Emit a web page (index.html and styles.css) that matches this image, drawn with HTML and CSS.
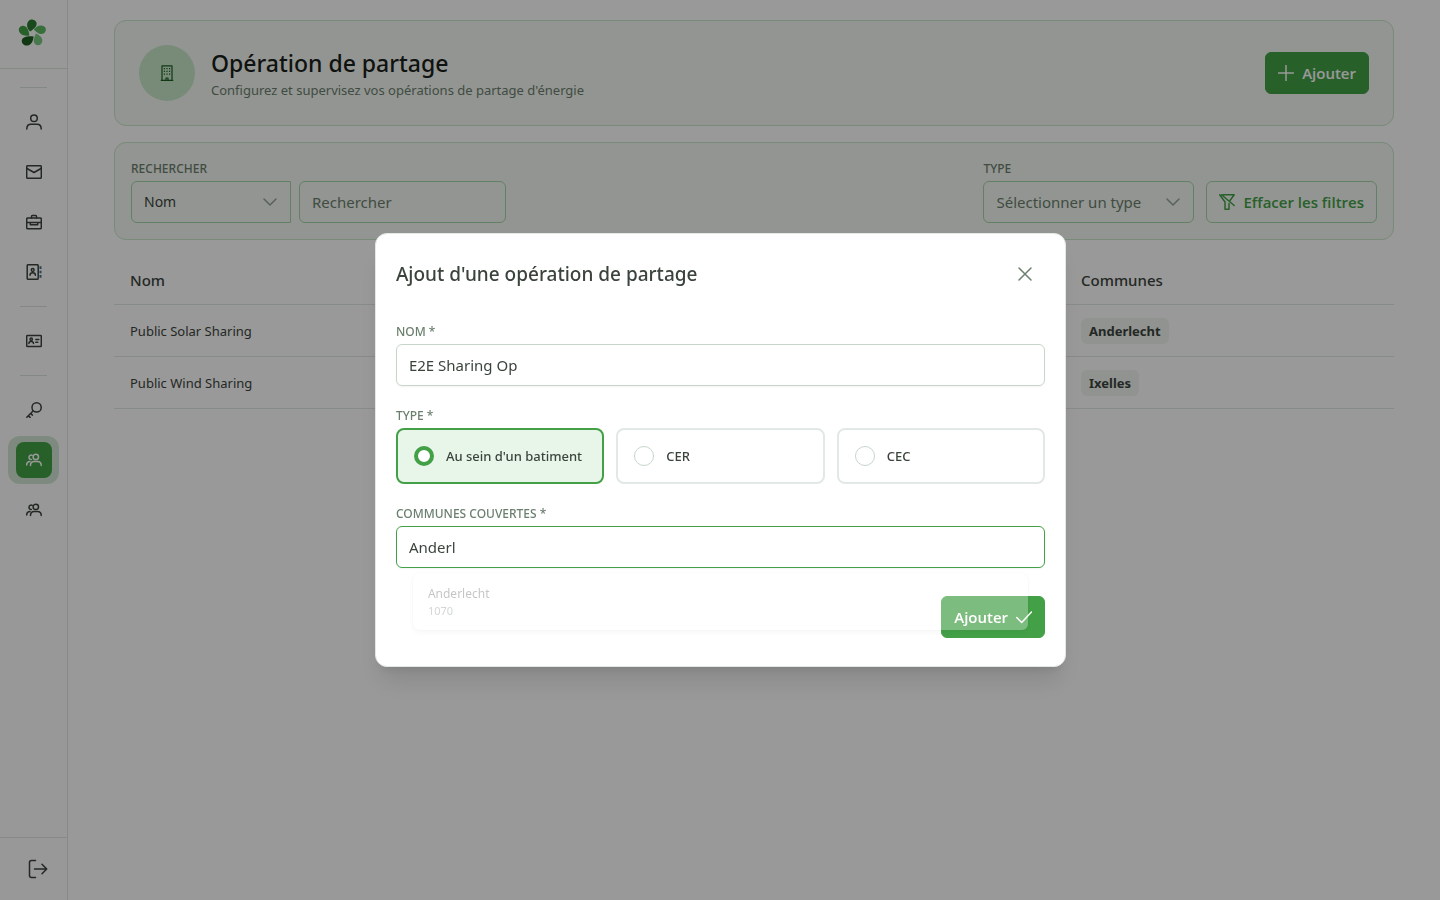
FILE: index.html
```html
<!DOCTYPE html>
<html lang="fr">
<head>
<meta charset="utf-8">
<meta name="viewport" content="width=device-width, initial-scale=1">
<title>Opération de partage</title>
<link rel="stylesheet" href="styles.css">
</head>
<body>
<div class="app">
  <aside class="sidebar">
    <a class="brand" href="#" aria-label="Accueil">
      <svg width="32" height="32" viewBox="0 2 32 32" aria-hidden="true">
        <path fill="#2d7a32" d="M14.200 15.600 C10.700 12 10.200 8 12.400 5.200 C14.200 2.600 18.800 3 20.300 6 C21.700 10 18.500 12.500 14.200 15.600Z"/>
        <path fill="#5cb860" d="M17.800 13.600 C20.500 9.900 24 8.500 27.500 10 C30.600 11.500 30.600 15.800 27.500 17.600 C24.200 19 21 17.200 17.800 13.600Z"/>
        <path fill="#7cc880" d="M19.900 17.600 C24.200 19.500 26.500 22 26.300 25.400 C25.800 29 21.500 30.400 19 28 C16.700 25.500 18 22 19.900 17.600Z"/>
        <path fill="#1b5e20" d="M17.600 20.400 C17.200 24.800 15.600 28.200 12 29.400 C8.500 30.200 5.300 27.500 5.800 24.200 C6.800 20.800 11 19.900 17.600 20.400Z"/>
        <path fill="#43a047" d="M13.300 19.500 C9.500 20.300 5.500 19.300 3.600 16.500 C1.800 13.500 3.300 10 6.800 9.800 C10.800 9.900 12.800 13.500 13.300 19.500Z"/>
      </svg>
    </a>
    <nav class="menu" aria-label="Menu principal">
      <hr>
      <a href="#" aria-label="Profil"><span><svg class="icon" viewBox="0 0 16 16"><circle cx="8" cy="4.300" r="3.300"/><path d="M.8 14.900c0-3.300 1.700-4.600 4.200-4.600h6c2.500 0 4.200 1.300 4.200 4.600"/></svg></span></a>
      <a href="#" aria-label="Messages"><span><svg class="icon" viewBox="0 0 16 16"><rect x=".7" y="1.700" width="14.600" height="12.600" rx="1"/><path d="M1 4.500l7 4 7-4"/></svg></span></a>
      <a href="#" aria-label="Entreprise"><span><svg class="icon" viewBox="0 0 16 16"><rect x=".7" y="4" width="14.600" height="10.700" rx="1"/><path d="M5.500 4V2.200q0-.8.8-.8h3.400q.8 0 .8.800V4M1 8.500h14M4.300 8.500v2.300h7.400V8.500"/></svg></span></a>
      <a href="#" aria-label="Contacts"><span><svg class="icon" viewBox="0 0 16 16"><rect x="1.200" y=".7" width="11" height="14.600" rx="1"/><circle cx="6.700" cy="6" r="1.400"/><path d="M4 11.300c0-1.900 1-2.500 2.700-2.500s2.700.6 2.700 2.500"/><path stroke="#3d7296" stroke-linecap="butt" stroke-width="2" d="M14.500 2.300v2.600M14.500 6.700v2.600M14.500 11.100v2.600"/></svg></span></a>
      <hr>
      <a href="#" aria-label="Membres"><span><svg class="icon" viewBox="0 0 16 16"><rect x=".7" y="2.500" width="14.600" height="11" rx=".8"/><circle cx="5.200" cy="6.300" r="1.200"/><path d="M2.900 10.600c0-1.600.9-2 2.300-2s2.300.4 2.300 2M9.800 6.500h3M9.800 9.300h2"/></svg></span></a>
      <hr>
      <a href="#" aria-label="Clés"><span><svg class="icon" viewBox="0 0 16 16"><circle cx="10.600" cy="5.400" r="4.600"/><path d="M7.300 8.700L.8 15.200M2.300 13.700l1.800 1.700M4.600 11.400l1.800 1.700"/></svg></span></a>
      <a class="active" href="#" aria-current="page" aria-label="Opérations de partage"><span><svg class="icon" viewBox="0 0 16 16"><circle cx="9.800" cy="4.900" r="2.700"/><path d="M4.500 13.500c0-2.800 1.600-3.900 3.800-3.900h3.100c2.200 0 3.800 1.100 3.800 3.900M6.200 3.400c-1.400-.8-3.200.2-3.200 1.900 0 1.400 1 2.300 2.300 2.300M.7 13c0-2.600 1.300-3.500 3.300-3.600"/></svg></span></a>
      <a href="#" aria-label="Utilisateurs"><span><svg class="icon" viewBox="0 0 16 16"><circle cx="9.800" cy="4.900" r="2.700"/><path d="M4.500 13.500c0-2.800 1.600-3.900 3.800-3.900h3.100c2.200 0 3.800 1.100 3.800 3.900M6.200 3.400c-1.400-.8-3.200.2-3.200 1.900 0 1.400 1 2.300 2.300 2.300M.7 13c0-2.600 1.300-3.500 3.300-3.600"/></svg></span></a>
    </nav>
    <button class="logout" type="button" aria-label="Se déconnecter"><svg class="icon" viewBox="0 0 20 20"><path d="M7.500 1.500H3.500q-2 0-2 2v13q0 2 2 2h4M6.500 10H18.500M14 5.300L18.700 10 14 14.700"/></svg></button>
  </aside>

  <main class="main">
    <header class="panel page-head">
      <span class="avatar"><svg class="icon" viewBox="0 0 16 16"><path d="M3 15V.8h10V15M2.200 15.300h11.600M7 15v-2h2v2"/><path stroke-linecap="butt" d="M4.800 3.700h1.200M7.400 3.700h1.200M10 3.700h1.200M4.800 6.400h1.200M7.400 6.400h1.200M10 6.400h1.200M4.800 9.100h1.200M7.400 9.100h1.200M10 9.100h1.200"/></svg></span>
      <div class="page-title">
        <h1>Opération de partage</h1>
        <p>Configurez et supervisez vos opérations de partage d'énergie</p>
      </div>
      <button class="btn" type="button"><svg class="icon" viewBox="0 0 16 16"><path d="M8 .5v15M.5 8h15"/></svg>Ajouter</button>
    </header>

    <section class="panel filters" aria-label="Filtres">
      <div class="field">
        <label for="search">Rechercher</label>
        <div class="row">
          <div class="select select-key">
            <select aria-label="Champ de recherche"><option>Nom</option></select>
            <svg class="icon" viewBox="0 0 14 14"><path d="M1 4l6 6 6-6"/></svg>
          </div>
          <input id="search" class="control search" type="text" placeholder="Rechercher">
        </div>
      </div>
      <div class="row filter-end">
        <div class="field">
          <label for="type">Type</label>
          <div class="select select-type">
            <select id="type"><option>Sélectionner un type</option></select>
            <svg class="icon" viewBox="0 0 14 14"><path d="M1 4l6 6 6-6"/></svg>
          </div>
        </div>
        <button class="btn btn-outline" type="button"><svg class="icon" viewBox="0 0 16 16"><path d="M4 .8h11.200L11 6.500M.7.8L6 8v7.200h4V9.500M2.500.8L15.200 11.500"/></svg>Effacer les filtres</button>
      </div>
    </section>

    <table class="list">
      <thead><tr><th>Nom</th><th>Communes</th></tr></thead>
      <tbody>
        <tr><td>Public Solar Sharing</td><td><span class="tag">Anderlecht</span></td></tr>
        <tr><td>Public Wind Sharing</td><td><span class="tag">Ixelles</span></td></tr>
      </tbody>
    </table>
  </main>
</div>

<div class="mask">
  <div class="dialog" role="dialog" aria-modal="true" aria-labelledby="dialog-title">
    <div class="dialog-head">
      <h2 id="dialog-title">Ajout d'une opération de partage</h2>
      <button class="close" type="button" aria-label="Fermer"><svg class="icon" viewBox="0 0 16 16"><path d="M2 2l12 12M14 2L2 14"/></svg></button>
    </div>
    <form class="form">
      <div class="field">
        <label for="name">Nom *</label>
        <input id="name" class="control" type="text" value="E2E Sharing Op">
      </div>
      <fieldset class="field">
        <legend>Type *</legend>
        <div class="choices">
          <label class="choice"><input type="radio" name="kind" checked>Au sein d'un batiment</label>
          <label class="choice"><input type="radio" name="kind">CER</label>
          <label class="choice"><input type="radio" name="kind">CEC</label>
        </div>
      </fieldset>
      <div class="field">
        <label for="communes">Communes couvertes *</label>
        <div class="combo">
          <input id="communes" class="control focused" type="text" value="Anderl" autocomplete="off">
          <ul class="options"><li>Anderlecht<small>1070</small></li></ul>
        </div>
      </div>
      <button class="btn submit" type="button">Ajouter<svg class="icon" viewBox="0 0 16 16"><path d="M.7 8.500l5 5L15.500 3"/></svg></button>
    </form>
  </div>
</div>
</body>
</html>
```
FILE: styles.css
```css
* { box-sizing: border-box; }

body {
  margin: 0;
  font-family: "Noto Sans", "Open Sans", sans-serif;
  font-size: 15px;
  line-height: 20px;
  color: #3b443c;
  background: #fff;
}

button, input, select { font: inherit; color: inherit; }
h1, h2, p, ul, fieldset { margin: 0; padding: 0; border: 0; }

.icon {
  width: 16px;
  height: 16px;
  flex: none;
  fill: none;
  stroke: currentColor;
  stroke-width: 1.5;
  stroke-linecap: round;
  stroke-linejoin: round;
}

.app { display: flex; min-height: 100vh; }

.sidebar {
  display: flex;
  flex-direction: column;
  width: 68px;
  flex: none;
  border-right: 1px solid #e2e8e3;
  background: #fcfdfc;
}
.brand {
  display: flex;
  align-items: center;
  justify-content: center;
  height: 69px;
  padding-right: 4px;
  border-bottom: 1px solid #dbe6dd;
}
.menu {
  display: flex;
  flex-direction: column;
  flex: 1;
  gap: 2px;
  padding: 8px;
}
.menu hr {
  width: 27px;
  height: 1px;
  margin: 8px auto;
  border: 0;
  background: #dbe3dc;
}
.menu hr:first-child { margin-top: 10px; }
.menu a {
  display: grid;
  place-items: center;
  height: 48px;
  border-radius: 12px;
  color: #3b443c;
}
.menu span {
  display: grid;
  place-items: center;
  width: 36px;
  height: 36px;
  border-radius: 8px;
}
.menu .active { background: #d3e6d5; color: #fff; }
.menu .active span { background: #43a047; }
.logout {
  display: flex;
  align-items: center;
  height: 63px;
  padding: 0 0 0 28px;
  border: 0;
  border-top: 1px solid #e2e8e3;
  background: none;
}
.logout .icon { width: 20px; height: 20px; }

.main { flex: 1; padding: 20px 46px; }

.panel {
  display: flex;
  align-items: center;
  border: 1px solid #c8e6c9;
  border-radius: 12px;
  background: #f5f9f3;
}
.page-head { gap: 16px; padding: 24px; }
.avatar {
  display: grid;
  place-items: center;
  width: 56px;
  height: 56px;
  border-radius: 50%;
  background: #c8e6c9;
  color: #1b5e20;
}
.avatar .icon { stroke-width: 1.2; }
.page-title { flex: 1; }
.page-title h1 {
  font-size: 23px;
  line-height: 34px;
  font-weight: 500;
  color: #1a211b;
}
.page-title p { font-size: 13px; color: #6b7f6e; }

.btn {
  display: inline-flex;
  align-items: center;
  gap: 8px;
  height: 42px;
  padding: 0 12px;
  border: 1px solid #43a047;
  border-radius: 6px;
  background: #43a047;
  color: #fff;
  font-family: "Open Sans", "Noto Sans", sans-serif;
  font-weight: 600;
}
.btn-outline { background: none; border-color: #a5d6a7; color: #43a047; }

.filters { justify-content: space-between; margin-top: 16px; padding: 16px; }
.field { display: flex; flex-direction: column; gap: 2px; }
.field > label, legend {
  padding: 0;
  font-size: 12px;
  line-height: 20px;
  font-weight: 500;
  text-transform: uppercase;
  color: #6b7f6e;
}
fieldset.field { display: block; }
legend { margin-bottom: 2px; }
.row { display: flex; gap: 8px; }
.filter-end { align-items: flex-end; gap: 12px; }

.control, .select select {
  width: 100%;
  height: 42px;
  padding: 0 12px;
  border: 1px solid #a5d6a7;
  border-radius: 6px;
  outline: 0;
  background: none;
}
.control::placeholder { color: #6b7f6e; opacity: 1; }
.search { width: 207px; }
.select { display: grid; align-items: center; }
.select > * { grid-area: 1 / 1; }
.select select { appearance: none; }
.select .icon {
  width: 14px;
  height: 14px;
  justify-self: end;
  margin-right: 14px;
  color: #94a396;
  pointer-events: none;
}
.select-key { width: 160px; }
.select-key select { border-radius: 6px 0 0 6px; font-size: 14px; }
.select-type { width: 211px; }
.select-type select { color: #6b7f6e; }

.list {
  width: 100%;
  margin-top: 16px;
  border-collapse: collapse;
  table-layout: fixed;
  text-align: left;
  font-size: 13px;
}
.list td { height: 52px; padding: 0 16px; border-bottom: 1px solid #e2e8e3; }
.list th {
  padding: 14px 16px;
  border-bottom: 1px solid #e2e8e3;
  font-size: 15px;
  font-weight: 500;
}
.list th:last-child { width: 329px; }
.tag {
  display: inline-block;
  padding: 3px 8px;
  border-radius: 6px;
  background: #f0f5f0;
  font-weight: 700;
}

.mask {
  position: fixed;
  inset: 0;
  display: flex;
  align-items: center;
  justify-content: center;
  padding-left: 1px;
  background: rgba(0, 0, 0, .4);
}
.dialog {
  width: 48vw;
  border: 1px solid #e2e8e3;
  border-radius: 12px;
  background: #fff;
  box-shadow: 0 20px 25px -5px rgba(0, 0, 0, .1), 0 8px 10px -6px rgba(0, 0, 0, .1);
}
.dialog-head {
  display: flex;
  align-items: center;
  justify-content: space-between;
  padding: 20px;
}
.dialog-head h2 { font-size: 19px; line-height: 28px; font-weight: 500; }
.close {
  display: grid;
  place-items: center;
  width: 40px;
  height: 40px;
  border: 0;
  background: none;
  color: #6b7f6e;
}
.form {
  display: flex;
  flex-direction: column;
  gap: 20px;
  padding: 8px 20px 28px;
}
.form .control { border-color: #c8d6ca; box-shadow: 0 1px 2px rgba(18, 18, 23, .05); }
.form .focused { border-color: #43a047; }
.choices { display: grid; grid-template-columns: repeat(3, 1fr); gap: 12px; }
.choice {
  display: flex;
  align-items: center;
  gap: 12px;
  height: 56px;
  padding: 0 16px;
  border: 2px solid #e2e8e5;
  border-radius: 8px;
  font-size: 13px;
  font-weight: 500;
  white-space: nowrap;
}
.choice:has(:checked) { border-color: #43a047; background: #e8f5e9; }
.choice input {
  appearance: none;
  width: 20px;
  height: 20px;
  flex: none;
  margin: 0;
  border: 1px solid #c8d6ca;
  border-radius: 50%;
  background: #fff;
}
.choice input:checked { border: 4px solid #43a047; }
.combo { position: relative; }
.options {
  position: absolute;
  top: 47px;
  left: 17px;
  right: 17px;
  padding: 11px 15px;
  border-radius: 6px;
  background: #fff;
  box-shadow: 0 0 2px rgba(0, 0, 0, .15), 0 3px 6px rgba(0, 0, 0, .1);
  opacity: .3;
  list-style: none;
  font-size: 12px;
  line-height: 19px;
}
.options small { display: block; font-size: 11px; line-height: 16px; color: #6b7f6e; }
.submit { align-self: flex-end; margin-top: 8px; }
```
